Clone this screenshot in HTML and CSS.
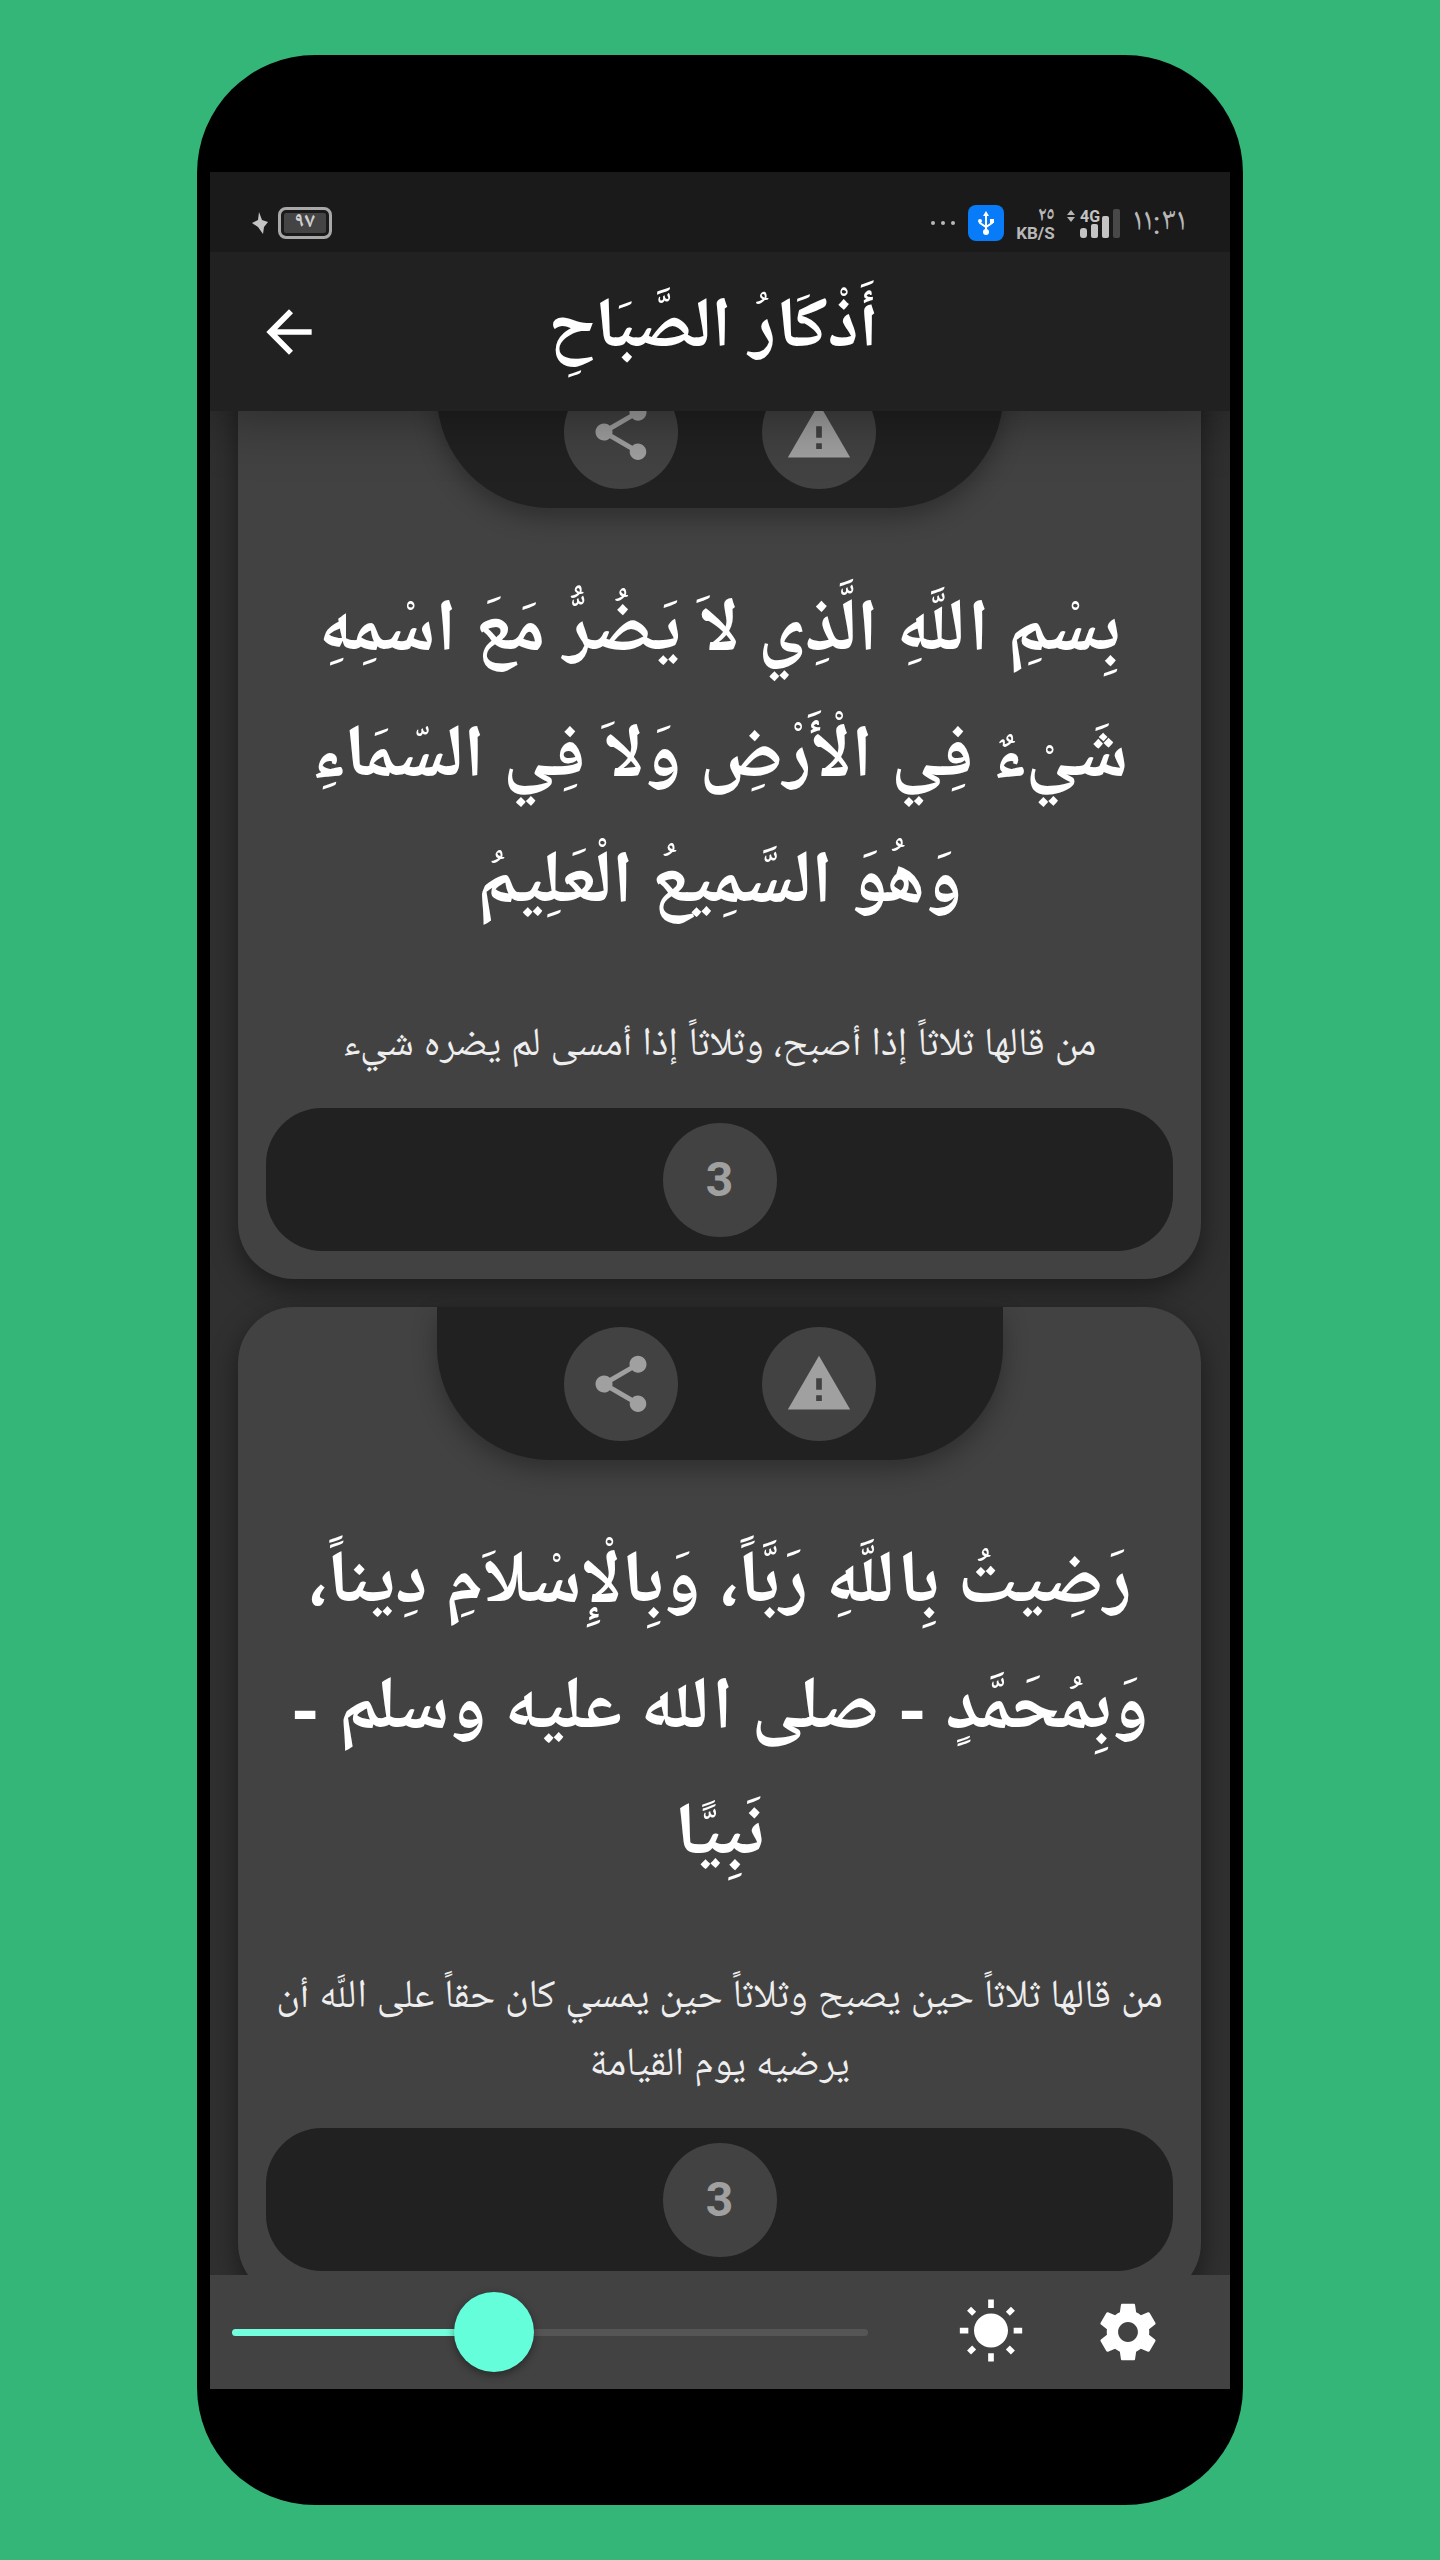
FILE: index.html
```html
<!DOCTYPE html>
<html lang="ar" dir="rtl">
<head>
<meta charset="utf-8">
<meta name="viewport" content="width=device-width, initial-scale=1">
<title>أذكار الصباح</title>
<link rel="stylesheet" href="styles.css">
</head>
<body>
<div class="phone">
  <div class="screen">
    <div class="status">
      <div class="status-group">
        <span class="clock" dir="ltr">١١:٣١</span>
        <svg class="signal" viewBox="0 0 54 32" aria-hidden="true">
          <path d="M4 3 8 8H0zM4 15 0 10h8z" fill="#b4b4b4"/>
          <rect x="13" y="21" width="7" height="10" rx="3" fill="#c4c4c4"/>
          <rect x="24" y="17" width="7" height="14" rx="2" fill="#c4c4c4"/>
          <rect x="35" y="9" width="7" height="22" rx="2" fill="#c4c4c4"/>
          <rect x="46" y="2" width="7" height="29" rx="2" fill="#484848"/>
          <text x="13" y="15" class="network">4G</text>
        </svg>
        <span class="speed"><span class="rate">٢٥</span><span dir="ltr">KB/S</span></span>
        <svg class="usb" viewBox="0 0 36 36" aria-hidden="true">
          <rect width="36" height="36" rx="8" fill="#087cf8"/>
          <g fill="none" stroke="#fff" stroke-width="2"><path d="M18 10v16M12 15v3l6 4 6-4v-3"/></g>
          <path d="M18 6l3 5h-6z" fill="#fff"/><circle cx="18" cy="27" r="3" fill="#fff"/><circle cx="12" cy="16" r="2" fill="#fff"/><rect x="22" y="14" width="4" height="4" fill="#fff"/>
        </svg>
        <svg class="dots" viewBox="0 0 26 6" aria-hidden="true"><g fill="#b8b8b8"><circle cx="3" cy="3" r="2"/><circle cx="13" cy="3" r="2"/><circle cx="23" cy="3" r="2"/></g></svg>
      </div>
      <div class="status-group power">
        <span class="battery">٩٧</span>
        <svg class="bolt" viewBox="0 0 16 22" aria-hidden="true"><path d="M7 0l3 8 6 2-4 5-1 7-5-7-6-4 6-3z" fill="#c4c4c4"/></svg>
      </div>
    </div>

    <header class="appbar">
      <h1>أَذْكَارُ الصَّبَاحِ</h1>
      <button class="icon-button back" aria-label="رجوع"><svg class="icon" viewBox="0 0 24 24"><path d="M20 11H7.83l5.59-5.59L12 4l-8 8 8 8 1.41-1.41L7.83 13H20v-2z"/></svg></button>
    </header>

    <main class="list">
      <article class="card">
        <div class="tools">
          <button class="round" aria-label="إبلاغ"><svg class="icon" viewBox="0 0 24 24"><path d="M1 21h22L12 2 1 21zm12-3h-2v-2h2v2zm0-4h-2v-4h2v4z"/></svg></button>
          <button class="round" aria-label="مشاركة"><svg class="icon" viewBox="0 0 24 24"><path d="M18 16.08c-.76 0-1.44.3-1.96.77L8.91 12.7c.05-.23.09-.46.09-.7s-.04-.47-.09-.7l7.05-4.11c.54.5 1.25.81 2.04.81 1.66 0 3-1.34 3-3s-1.34-3-3-3-3 1.34-3 3c0 .24.04.47.09.7L8.04 9.81C7.5 9.31 6.79 9 6 9c-1.66 0-3 1.34-3 3s1.34 3 3 3c.79 0 1.5-.31 2.04-.81l7.12 4.16c-.05.21-.08.43-.08.65 0 1.61 1.31 2.92 2.92 2.92s2.92-1.31 2.92-2.92-1.31-2.92-2.92-2.92z"/></svg></button>
        </div>
        <p class="verse">بِسْمِ اللَّهِ الَّذِي لاَ يَضُرُّ مَعَ اسْمِهِ<br>شَيْءٌ فِي الْأَرْضِ وَلاَ فِي السّمَاءِ<br>وَهُوَ السَّمِيعُ الْعَلِيمُ</p>
        <p class="note">من قالها ثلاثاً إذا أصبح، وثلاثاً إذا أمسى لم يضره شيء</p>
        <div class="counter"><button class="round">3</button></div>
      </article>

      <article class="card">
        <div class="tools">
          <button class="round" aria-label="إبلاغ"><svg class="icon" viewBox="0 0 24 24"><path d="M1 21h22L12 2 1 21zm12-3h-2v-2h2v2zm0-4h-2v-4h2v4z"/></svg></button>
          <button class="round" aria-label="مشاركة"><svg class="icon" viewBox="0 0 24 24"><path d="M18 16.08c-.76 0-1.44.3-1.96.77L8.91 12.7c.05-.23.09-.46.09-.7s-.04-.47-.09-.7l7.05-4.11c.54.5 1.25.81 2.04.81 1.66 0 3-1.34 3-3s-1.34-3-3-3-3 1.34-3 3c0 .24.04.47.09.7L8.04 9.81C7.5 9.31 6.79 9 6 9c-1.66 0-3 1.34-3 3s1.34 3 3 3c.79 0 1.5-.31 2.04-.81l7.12 4.16c-.05.21-.08.43-.08.65 0 1.61 1.31 2.92 2.92 2.92s2.92-1.31 2.92-2.92-1.31-2.92-2.92-2.92z"/></svg></button>
        </div>
        <p class="verse">رَضِيتُ بِاللَّهِ رَبَّاً، وَبِالْإِسْلاَمِ دِيناً،<br>وَبِمُحَمَّدٍ - صلى الله عليه وسلم -<br>نَبِيًّا</p>
        <p class="note">من قالها ثلاثاً حين يصبح وثلاثاً حين يمسي كان حقاً على اللَّه أن<br>يرضيه يوم القيامة</p>
        <div class="counter"><button class="round">3</button></div>
      </article>
    </main>

    <footer class="bottombar">
      <button class="icon-button" aria-label="الإعدادات"><svg class="icon" viewBox="0 0 24 24"><path d="M19.43 12.98c.04-.32.07-.64.07-.98s-.03-.66-.07-.98l2.11-1.65c.19-.15.24-.42.12-.64l-2-3.46c-.12-.22-.39-.3-.61-.22l-2.49 1c-.52-.4-1.08-.73-1.69-.98l-.38-2.65C14.46 2.18 14.25 2 14 2h-4c-.25 0-.46.18-.49.42l-.38 2.65c-.61.25-1.17.59-1.69.98l-2.49-1c-.23-.09-.49 0-.61.22l-2 3.46c-.13.22-.07.49.12.64l2.11 1.65c-.04.32-.07.65-.07.98s.03.66.07.98l-2.11 1.65c-.19.15-.24.42-.12.64l2 3.46c.12.22.39.3.61.22l2.49-1c.52.4 1.08.73 1.69.98l.38 2.65c.03.24.24.42.49.42h4c.25 0 .46-.18.49-.42l.38-2.65c.61-.25 1.17-.59 1.69-.98l2.49 1c.23.09.49 0 .61-.22l2-3.46c.12-.22.07-.49-.12-.64l-2.11-1.65zM12 15.5c-1.93 0-3.5-1.57-3.5-3.5s1.57-3.5 3.5-3.5 3.5 1.57 3.5 3.5-1.57 3.5-3.5 3.5z"/></svg></button>
      <button class="icon-button" aria-label="السطوع"><svg class="icon" viewBox="0 0 24 24"><path d="M6.76 4.84l-1.8-1.79-1.41 1.41 1.79 1.79 1.42-1.41zM4 10.5H1v2h3v-2zm9-9.95h-2V3.5h2V.55zm7.45 3.91l-1.41-1.41-1.79 1.79 1.41 1.41 1.79-1.79zm-3.21 13.7l1.79 1.8 1.41-1.41-1.8-1.79-1.4 1.4zM20 10.5v2h3v-2h-3zm-8-5c-3.31 0-6 2.69-6 6s2.69 6 6 6 6-2.69 6-6-2.69-6-6-6zm-1 16.95h2V19.5h-2v2.95zm-7.45-3.91l1.41 1.41 1.79-1.8-1.41-1.41-1.79 1.8z"/></svg></button>
      <input class="slider" type="range" dir="ltr" min="0" max="100" value="40" aria-label="حجم الخط">
    </footer>
  </div>
</div>
</body>
</html>
```
FILE: styles.css
```css
* { box-sizing: border-box; }

body {
  margin: 0;
  padding: 55px 197px;
  background: #35b679;
  color: #fff;
  font-family: Roboto, "Noto Naskh Arabic UI", "Noto Naskh Arabic", "Noto Sans Arabic", "DejaVu Sans", sans-serif;
}

h1, p { margin: 0; }

button {
  padding: 0;
  border: 0;
  background: none;
  color: inherit;
  font: inherit;
}

.phone {
  padding: 117px 13px 116px;
  border-radius: 118px;
  background: #000;
}

.screen {
  overflow: hidden;
  background: #303030;
}

.icon {
  display: block;
  width: 68px;
  height: 68px;
  fill: currentColor;
}

/* Status bar */
.status {
  position: relative;
  z-index: 2;
  display: flex;
  justify-content: space-between;
  align-items: center;
  height: 80px;
  padding: 22px 44px 0 42px;
  background: #1a1a1a;
  color: #b8b8b8;
}

.status-group { display: flex; align-items: center; gap: 12px; }
.power { gap: 10px; }
.clock { font-size: 32px; line-height: 32px; }
.signal { width: 54px; height: 32px; }
.network { font: bold 16px Roboto, sans-serif; fill: #c4c4c4; direction: ltr; }

.speed {
  display: flex;
  flex-direction: column;
  align-items: flex-start;
  font-size: 17px;
  font-weight: 700;
  line-height: 14px;
}

.rate { font-size: 20px; line-height: 20px; }

.usb { width: 36px; height: 36px; }
.dots { width: 26px; height: 6px; }

.battery {
  width: 54px;
  height: 32px;
  border: 3px solid #a8a8a8;
  border-radius: 8px;
  background: #444;
  box-shadow: inset 0 0 0 3px #1a1a1a;
  color: #d0d0d0;
  font-size: 21px;
  font-weight: 700;
  line-height: 26px;
  text-align: center;
}

.bolt { width: 16px; height: 22px; }

/* App bar */
.appbar {
  position: relative;
  z-index: 1;
  display: grid;
  grid-template-columns: 68px 1fr 68px;
  align-items: center;
  height: 159px;
  padding: 0 46px 0 45px;
  background: #212121;
  box-shadow: 0 4px 60px rgba(0, 0, 0, .4);
}

.appbar h1 {
  grid-column: 2;
  padding-right: 12px;
  font-size: 71px;
  line-height: 100px;
  text-align: center;
}

/* Cards */
.list {
  display: flex;
  flex-direction: column;
  gap: 28px;
  padding: 0 29px 0 28px;
  overflow: hidden;
}

.card {
  display: flex;
  flex-direction: column;
  padding: 0 28px 28px;
  border-radius: 56px;
  background: #424242;
  box-shadow: 0 10px 28px rgba(0, 0, 0, .45);
}

/* The list is scrolled part-way: its ends run under the two bars */
.card:first-child { margin-top: -56px; }
.card:last-child { margin-bottom: -24px; }

.tools {
  display: flex;
  justify-content: center;
  align-items: center;
  align-self: center;
  gap: 84px;
  width: 566px;
  max-width: 100%;
  height: 153px;
  border-radius: 0 0 113px 113px;
  background: #212121;
  box-shadow: 0 10px 24px rgba(0, 0, 0, .3);
}

.round {
  display: grid;
  place-items: center;
  width: 114px;
  height: 114px;
  border-radius: 50%;
  background: #424242;
  color: #a0a0a0;
  font-size: 48px;
  font-weight: 700;
  line-height: 56px;
}

.verse {
  margin-top: 64px;
  font-size: 74px;
  font-weight: 700;
  line-height: 126px;
  text-align: center;
  white-space: nowrap;
}

.note {
  margin: 63px 0 27px;
  color: #eee;
  font-size: 40px;
  line-height: 68px;
  text-align: center;
  white-space: nowrap;
}

.counter {
  display: flex;
  justify-content: center;
  align-items: center;
  height: 143px;
  border-radius: 56px;
  background: #212121;
}

/* Bottom bar */
.bottombar {
  position: relative;
  display: flex;
  align-items: center;
  gap: 69px;
  height: 114px;
  padding: 0 68px 0 22px;
  background: #424242;
}

.slider {
  flex: 1;
  min-width: 0;
  height: 80px;
  margin: 0 20px 0 0;
  appearance: none;
  background: none;
}

.slider::-webkit-slider-runnable-track {
  height: 7px;
  border-radius: 4px;
  background: linear-gradient(to right, #73ffdd 41%, #555 41%);
}

.slider::-webkit-slider-thumb {
  width: 80px;
  height: 80px;
  margin-top: -37px;
  appearance: none;
  border-radius: 50%;
  background: #64ffda;
  box-shadow: 0 3px 8px rgba(0, 0, 0, .4);
}
```
